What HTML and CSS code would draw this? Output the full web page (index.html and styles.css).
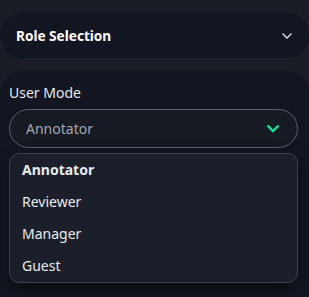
FILE: index.html
```html
<!DOCTYPE html>
<html lang="en">
<head>
  <meta charset="UTF-8">
  <meta name="viewport" content="width=device-width, initial-scale=1.0">
  <title>Role Selection</title>
  <link rel="stylesheet" href="styles.css">
</head>
<body>
  <div class="panel">
    <div class="panel-header">
      <span>Role Selection</span>
      <svg class="chev" width="12" height="8" viewBox="0 0 12 8">
        <path d="M1.5 1.5 L6 6 L10.5 1.5" fill="none" stroke="#e5e7eb" stroke-width="1.3"/>
      </svg>
    </div>

    <div class="panel-body">
      <label class="field-label">User Mode</label>
      <div class="select">
        <span>Annotator</span>
        <svg width="14" height="9" viewBox="0 0 14 9">
          <path d="M1.5 1.5 L7 7 L12.5 1.5" fill="none" stroke="#19e39b" stroke-width="2.4"/>
        </svg>
      </div>
      <ul class="options">
        <li class="active">Annotator</li>
        <li>Reviewer</li>
        <li>Manager</li>
        <li>Guest</li>
      </ul>
    </div>
  </div>
</body>
</html>
```

FILE: styles.css
```css
/* === Cores === */
:root {
  --bg-page: #1a1d26;
  --bg-card: #121620;
  --bg-menu: #1b1f29;
  --border: #5a5f6c;
  --border-menu: #3b404c;
  --text: #e8eaee;
  --text-muted: #a3a8b3;
  --accent: #19e39b;
}

* {
  box-sizing: border-box;
  margin: 0;
  padding: 0;
}
body {
  font-family: "Noto Sans", Arial, sans-serif;
  background: var(--bg-page);
  color: var(--text);
  padding-top: 13px;
}

/* === Cabeçalho === */
.panel-header {
  height: 45px;
  display: flex;
  align-items: center;
  justify-content: space-between;
  padding: 0 16px;
  background: var(--bg-card);
  border-radius: 22px;
  font-size: 13.6px;
  font-weight: bold;
  color: #fff;
}

/* === Corpo === */
.panel-body {
  margin-top: 13px;
  background: var(--bg-card);
  border-radius: 22px 22px 0 0;
  padding: 13px 11px 0 9px;
  height: 230px;
}
.field-label {
  display: block;
  font-size: 14px;
  line-height: 18px;
  margin-bottom: 7px;
}
.select {
  height: 39px;
  display: flex;
  align-items: center;
  justify-content: space-between;
  padding: 0 17px 0 16px;
  border: 1px solid var(--border);
  border-radius: 20px;
  background: #161a23;
  color: var(--text-muted);
  font-size: 14px;
}

.options {
  list-style: none;
  margin-top: 5px;
  background: var(--bg-menu);
  border: 1px solid var(--border-menu);
  border-radius: 10px;
  padding: 0;
  box-shadow: 0 6px 16px rgba(0, 0, 0, 0.45);
}
.options li {
  height: 32px;
  line-height: 32px;
  padding-left: 12px;
  font-size: 14px;
  color: var(--text);
}
.options li.active {
  font-weight: bold;
}
```
